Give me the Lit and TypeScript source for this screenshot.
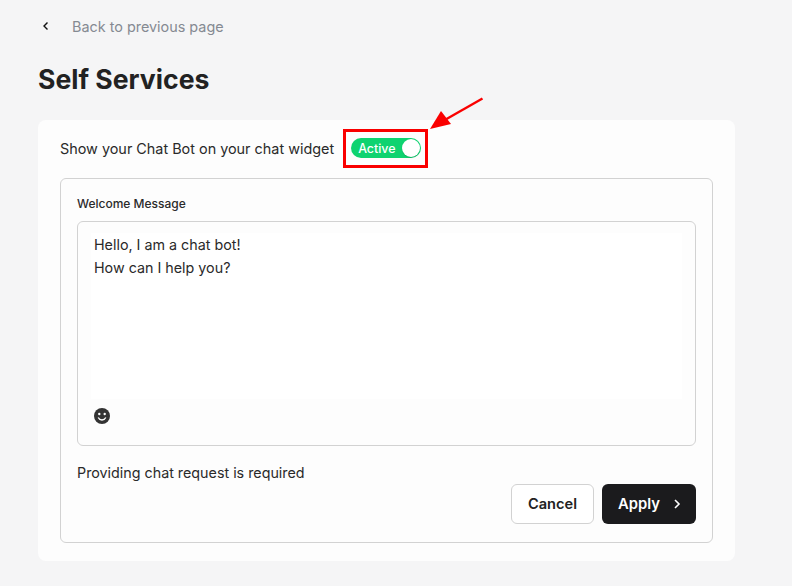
import { LitElement, html, css } from "lit";
import { customElement } from "lit/decorators.js";

@customElement("app-root")
export class AppRoot extends LitElement {
  static styles = css`
    :host {
      display: block;
      width: 792px;
      height: 586px;
      background: #f5f5f6;
      font-family: "Inter", "Liberation Sans", sans-serif;
      color: #222;
      overflow: hidden;
      position: relative;
      box-sizing: border-box;
    }
    .page { padding: 16px 57px 0 38px; display: flex; flex-direction: column; }
    .back { display: flex; align-items: center; height: 20px; gap: 20px; font-size: 14.4px; color: #858a92; }
    .back svg { display: block; margin-left: 2px; }
    h1 { margin: 27px 0 25px; font-size: 26.6px; line-height: 32px; font-weight: 700; color: #222; height: 32px; }
    .card { background: #fdfdfd; border-radius: 8px; height: 441px; padding: 18px 22px 18px; box-sizing: border-box; display: flex; flex-direction: column; }
    .row { display: flex; align-items: center; height: 21px; gap: 17px; font-size: 14.4px; margin-bottom: 19px; color: #2a2a2a; }
    .toggle { width: 70px; height: 20px; border-radius: 10px; background: #0ed370; color: #fff; font-size: 12.4px; font-weight: 500; display: flex; align-items: center; justify-content: space-between; padding: 0 1px 0 7px; box-sizing: border-box; flex: none; margin-top: -1px; }
    .knob { width: 18px; height: 18px; border-radius: 50%; background: #fff; box-shadow: 0 1px 1px rgba(0,0,0,.15); }
    .panel { flex: 1; border: 1px solid #d2d2d2; border-radius: 6px; padding: 17px 16px 18px; display: flex; flex-direction: column; }
    .label { font-size: 12px; line-height: 16px; font-weight: 500; color: #2a2a2a; margin-bottom: 9px; }
    .editor { border: 1px solid #d2d2d2; border-radius: 6px; height: 225px; box-sizing: border-box; padding: 11px 13px 0; display: flex; flex-direction: column; }
    .text { background: #fff; height: 166px; padding: 0 3px; font-size: 14.3px; line-height: 23px; color: #2a2a2a; }
    .emoji { margin: 9px 0 0 3px; display: block; }
    .note { font-size: 14.3px; line-height: 18px; margin-top: 18px; color: #2a2a2a; }
    .actions { display: flex; justify-content: flex-end; gap: 8px; margin-top: 2px; }
    .btn { height: 40px; border-radius: 6px; box-sizing: border-box; font-size: 14.6px; font-weight: 600; display: flex; align-items: center; font-family: inherit; }
    .cancel { width: 83px; border: 1px solid #d2d2d2; background: #fff; color: #222; justify-content: center; }
    .apply { width: 94px; background: #1b1b1d; color: #fff; padding-left: 16px; gap: 11px; border: none; font-size: 14.8px; }
    .redbox { position: absolute; left: 343px; top: 129px; width: 85px; height: 39px; border: 3px solid #fa0000; box-sizing: border-box; pointer-events: none; }
    .arrow { position: absolute; left: 425px; top: 92px; }
  `;

  render() {
    return html`
      <div class="page">
        <div class="back">
          <svg width="12" height="12" viewBox="0 0 12 12" fill="none" stroke="#111" stroke-width="1.4"><path d="M7.5 2.4 4 6l3.5 3.6"/></svg>
          <span>Back to previous page</span>
        </div>
        <h1>Self Services</h1>
        <div class="card">
          <div class="row">
            <span>Show your Chat Bot on your chat widget</span>
            <div class="toggle"><span>Active</span><span class="knob"></span></div>
          </div>
          <div class="panel">
            <div class="label">Welcome Message</div>
            <div class="editor">
              <div class="text">Hello, I am a chat bot!<br />How can I help you?</div>
              <svg class="emoji" width="16" height="16" viewBox="0 0 16 16">
                <circle cx="8" cy="8" r="8" fill="#333"/>
                <circle cx="5.3" cy="6" r="1.2" fill="#fdfdfd"/>
                <circle cx="10.7" cy="6" r="1.2" fill="#fdfdfd"/>
                <path d="M4.2 9.5c.8 1.7 2.2 2.5 3.8 2.5s3-.8 3.8-2.5" fill="none" stroke="#fdfdfd" stroke-width="1.3"/>
              </svg>
            </div>
            <div class="note">Providing chat request is required</div>
            <div class="actions">
              <button class="btn cancel">Cancel</button>
              <button class="btn apply"><span>Apply</span>
                <svg width="12" height="12" viewBox="0 0 12 12" fill="none" stroke="#fff" stroke-width="1.6"><path d="M4 2 8 6 4 10"/></svg>
              </button>
            </div>
          </div>
        </div>
      </div>
      <div class="redbox"></div>
      <svg class="arrow" width="62" height="40" viewBox="0 0 62 40">
        <path d="M57.5 6.5 18 29" stroke="#fa0000" stroke-width="2.4" fill="none"/>
        <path d="M5 37 L16 19 L26 32 Z" fill="#fa0000"/>
      </svg>
    `;
  }
}
